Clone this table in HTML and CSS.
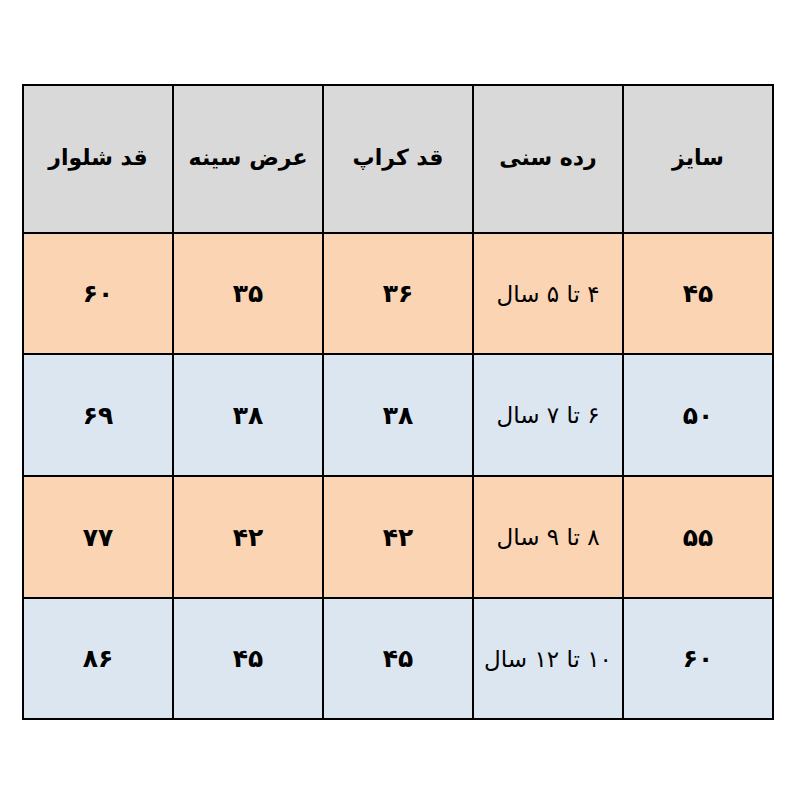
FILE: index.html
```
<!DOCTYPE html>
<html lang="fa">
<head>
<meta charset="utf-8">
<link rel="stylesheet" href="styles.css">
</head>
<body>
<div class="grid">
  <div class="cell head">سایز</div>
  <div class="cell head">رده سنی</div>
  <div class="cell head">قد کراپ</div>
  <div class="cell head">عرض سینه</div>
  <div class="cell head">قد شلوار</div>

  <div class="cell orange num">۴۵</div>
  <div class="cell orange age">۴ تا ۵ سال</div>
  <div class="cell orange num">۳۶</div>
  <div class="cell orange num">۳۵</div>
  <div class="cell orange num">۶۰</div>

  <div class="cell blue num">۵۰</div>
  <div class="cell blue age">۶ تا ۷ سال</div>
  <div class="cell blue num">۳۸</div>
  <div class="cell blue num">۳۸</div>
  <div class="cell blue num">۶۹</div>

  <div class="cell orange num">۵۵</div>
  <div class="cell orange age">۸ تا ۹ سال</div>
  <div class="cell orange num">۴۲</div>
  <div class="cell orange num">۴۲</div>
  <div class="cell orange num">۷۷</div>

  <div class="cell blue num">۶۰</div>
  <div class="cell blue age">۱۰ تا ۱۲ سال</div>
  <div class="cell blue num">۴۵</div>
  <div class="cell blue num">۴۵</div>
  <div class="cell blue num">۸۶</div>
</div>
</body>
</html>
```
FILE: styles.css
```
html, body {
  margin: 0;
  padding: 0;
  background: #ffffff;
}
body {
  padding: 84px 0 0 22px;
  font-family: "DejaVu Sans", sans-serif;
  color: #000;
}
.grid {
  direction: rtl;
  display: grid;
  grid-template-columns: repeat(5, 148px);
  grid-template-rows: 146px 119px 120px 120px 119px;
  gap: 2px;
  padding: 2px;
  background: #000;
  width: max-content;
}
.cell {
  display: flex;
  align-items: center;
  justify-content: center;
}
.head {
  background: #d9d9d9;
  font-weight: bold;
  font-size: 22px;
  padding-bottom: 4px;
}
.orange { background: #fbd4b4; }
.blue { background: #dce6f1; }
.num {
  font-weight: bold;
  font-size: 25px;
}
.age {
  font-size: 23px;
}
```
